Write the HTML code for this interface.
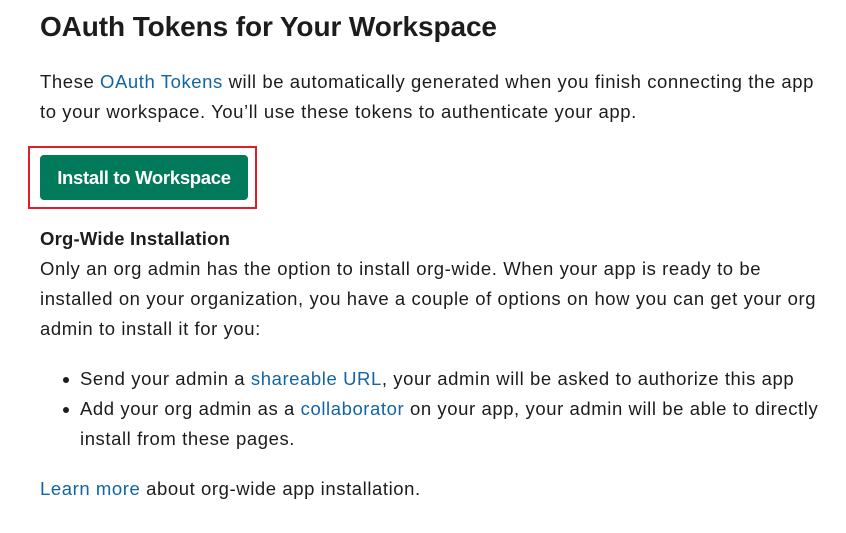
<!DOCTYPE html>
<html><head><style>
body{margin:0;background:#fff;font-family:"Liberation Sans",sans-serif;color:#1d1c1d;width:846px;height:533px;overflow:hidden}
.w{position:absolute;left:40px;top:0;width:800px}
h1{position:absolute;top:11px;left:0;margin:0;font-size:28px;font-weight:bold;letter-spacing:-0.1px;white-space:nowrap}
.l{position:absolute;left:0;font-size:18.5px;letter-spacing:0.58px;line-height:30px;white-space:nowrap;margin-top:1px}
a{color:#1264a3;text-decoration:none}
.box{position:absolute;left:-12px;top:146px;width:225px;height:59px;border:2px solid #e01e2a}
.btn{position:absolute;left:0;top:155px;width:208px;height:45px;background:#007a5a;border-radius:4px;color:#fff;font-weight:bold;font-size:18.5px;line-height:45px;text-align:center;letter-spacing:-0.3px}
.dot{position:absolute;width:6px;height:6px;border-radius:50%;background:#1d1c1d}
</style></head><body><div class="w">
<h1>OAuth Tokens for Your Workspace</h1>
<div class="l" style="top:66px">These <a>OAuth Tokens</a> will be automatically generated when you finish connecting the app</div>
<div class="l" style="top:96px">to your workspace. You’ll use these tokens to authenticate your app.</div>
<div class="box"></div>
<div class="btn">Install to Workspace</div>
<div class="l" style="top:223px;font-weight:bold;letter-spacing:0.2px">Org-Wide Installation</div>
<div class="l" style="top:253px">Only an org admin has the option to install org-wide. When your app is ready to be</div>
<div class="l" style="top:283px">installed on your organization, you have a couple of options on how you can get your org</div>
<div class="l" style="top:313px">admin to install it for you:</div>
<div class="dot" style="left:23px;top:377px"></div>
<div class="l" style="top:363px;left:40px">Send your admin a <a>shareable URL</a>, your admin will be asked to authorize this app</div>
<div class="dot" style="left:23px;top:407px"></div>
<div class="l" style="top:393px;left:40px">Add your org admin as a <a>collaborator</a> on your app, your admin will be able to directly</div>
<div class="l" style="top:423px;left:40px">install from these pages.</div>
<div class="l" style="top:473px"><a>Learn more</a> about org-wide app installation.</div>
</div></body></html>
